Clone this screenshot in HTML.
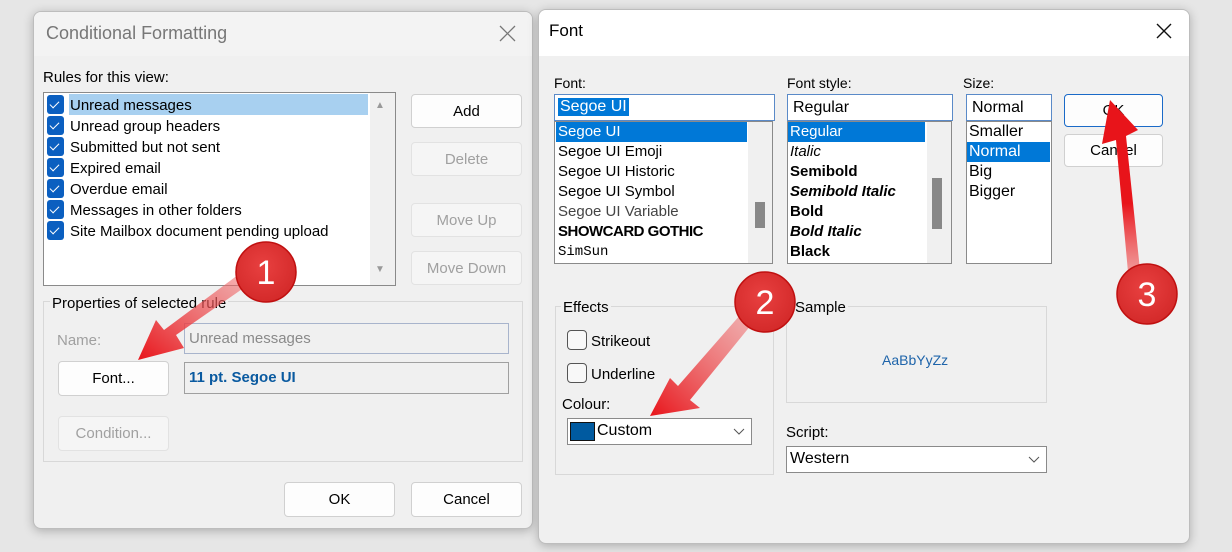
<!DOCTYPE html>
<html><head><meta charset="utf-8"><style>
*{box-sizing:border-box;margin:0;padding:0}
body{width:1232px;height:552px;background:#e6e6e6;font-family:"Liberation Sans",sans-serif;position:relative;overflow:hidden;color:#000}
.a{position:absolute}
.dlg{background:#f0f0f0;border:1px solid #bdbdbd;border-radius:8px;box-shadow:0 2px 10px rgba(0,0,0,.25)}
.btn{position:absolute;background:#fdfdfd;border:1px solid #d0d0d0;border-radius:4px;font-size:15px;text-align:center;display:flex;align-items:center;justify-content:center}
.dis{background:#f5f5f5;border-color:#e2e2e2;color:#a0a0a0}
.t{position:absolute;font-size:15px;white-space:nowrap}
.cb{position:absolute;width:17px;height:19px;background:#0b5fc0;border-radius:3px}
.cb:after{content:"";position:absolute;left:5px;top:4px;width:4px;height:8px;border:solid #fff;border-width:0 1.3px 1.3px 0;transform:rotate(45deg)}
.box{position:absolute;background:#fff;border:1px solid #8a8a8a}
.grp{position:absolute;border:1px solid #d8d8d8}
.li{position:absolute;font-size:15px;height:20px;line-height:20px;white-space:nowrap;padding-left:2px}
.sel{background:#0078d7;color:#fff}
</style></head><body>

<div class="a dlg" style="left:33px;top:11px;width:500px;height:518px;overflow:hidden">
 <div class="a" style="left:0;top:0;width:500px;height:44px;background:#f3f3f3"></div>
</div>
<div class="t" style="left:46px;top:23px;font-size:18px;color:#777">Conditional Formatting</div>
<svg class="a" style="left:499px;top:25px" width="18" height="18"><path d="M1 1L16 16M16 1L1 16" stroke="#777" stroke-width="1.3"/></svg>
<div class="t" style="left:43px;top:69px">Rules for this view:</div>
<div class="box" style="left:43px;top:92px;width:353px;height:194px"></div>
<div class="a" style="left:370px;top:93px;width:25px;height:192px;background:#f0f0f0"></div>
<div class="t" style="left:375px;top:100px;font-size:10px;color:#999">▲</div>
<div class="t" style="left:375px;top:264px;font-size:10px;color:#999">▼</div>
<div class="a" style="left:69px;top:94px;width:299px;height:21px;background:#a8d0f0"></div>
<div class="cb" style="left:47px;top:95px"></div><div class="t" style="left:70px;top:97px">Unread messages</div>
<div class="cb" style="left:47px;top:116px"></div><div class="t" style="left:70px;top:118px">Unread group headers</div>
<div class="cb" style="left:47px;top:137px"></div><div class="t" style="left:70px;top:139px">Submitted but not sent</div>
<div class="cb" style="left:47px;top:158px"></div><div class="t" style="left:70px;top:160px">Expired email</div>
<div class="cb" style="left:47px;top:179px"></div><div class="t" style="left:70px;top:181px">Overdue email</div>
<div class="cb" style="left:47px;top:200px"></div><div class="t" style="left:70px;top:202px">Messages in other folders</div>
<div class="cb" style="left:47px;top:221px"></div><div class="t" style="left:70px;top:223px">Site Mailbox document pending upload</div>
<div class="btn" style="left:411px;top:94px;width:111px;height:34px">Add</div>
<div class="btn dis" style="left:411px;top:142px;width:111px;height:34px">Delete</div>
<div class="btn dis" style="left:411px;top:203px;width:111px;height:34px">Move Up</div>
<div class="btn dis" style="left:411px;top:251px;width:111px;height:34px">Move Down</div>
<div class="grp" style="left:43px;top:301px;width:480px;height:161px"></div>
<div class="t" style="left:50px;top:295px;background:#f0f0f0;padding:0 2px">Properties of selected rule</div>
<div class="t" style="left:57px;top:332px;color:#a0a0a0">Name:</div>
<div class="a" style="left:184px;top:323px;width:325px;height:31px;border:1px solid #a8b4cc;background:#f0f0f0"></div>
<div class="t" style="left:189px;top:330px;color:#8a8a8a">Unread messages</div>
<div class="btn" style="left:58px;top:361px;width:111px;height:35px">Font...</div>
<div class="a" style="left:184px;top:362px;width:325px;height:32px;border:1px solid #a0a0a0"></div>
<div class="t" style="left:189px;top:369px;color:#0a5aa0;font-weight:bold">11 pt. Segoe UI</div>
<div class="btn dis" style="left:58px;top:416px;width:111px;height:35px">Condition...</div>
<div class="btn" style="left:284px;top:482px;width:111px;height:35px">OK</div>
<div class="btn" style="left:411px;top:482px;width:111px;height:35px">Cancel</div>

<div class="a dlg" style="left:538px;top:9px;width:652px;height:535px;overflow:hidden">
 <div class="a" style="left:0;top:0;width:652px;height:46px;background:#fff"></div>
</div>
<div class="t" style="left:549px;top:21px;font-size:17px">Font</div>
<svg class="a" style="left:1156px;top:23px" width="16" height="16"><path d="M1 1L15 15M15 1L1 15" stroke="#111" stroke-width="1.4"/></svg>
<div class="t" style="left:554px;top:75px;font-size:14px">Font:</div>
<div class="t" style="left:787px;top:75px;font-size:14px">Font style:</div>
<div class="t" style="left:963px;top:75px;font-size:14px">Size:</div>
<div class="box" style="left:554px;top:94px;width:221px;height:27px;border-color:#5a8ac8"></div>
<div class="t" style="left:558px;top:98px;background:#0078d7;color:#fff;padding:0 2px;font-size:16px">Segoe UI</div>
<div class="box" style="left:787px;top:94px;width:166px;height:27px;border-color:#5a8ac8"></div>
<div class="t" style="left:793px;top:99px;font-size:16px">Regular</div>
<div class="box" style="left:966px;top:94px;width:86px;height:27px;border-color:#5a8ac8"></div>
<div class="t" style="left:972px;top:99px;font-size:16px">Normal</div>

<div class="box" style="left:554px;top:121px;width:219px;height:143px"></div>
<div class="a" style="left:748px;top:122px;width:24px;height:141px;background:#f0f0f0"></div>
<div class="a" style="left:755px;top:202px;width:10px;height:26px;background:#888"></div>
<div class="li sel" style="left:556px;top:122px;width:191px">Segoe UI</div>
<div class="li" style="left:556px;top:142px">Segoe UI Emoji</div>
<div class="li" style="left:556px;top:162px">Segoe UI Historic</div>
<div class="li" style="left:556px;top:182px">Segoe UI Symbol</div>
<div class="li" style="left:556px;top:202px;color:#444">Segoe UI Variable</div>
<div class="li" style="left:556px;top:222px;font-weight:900;letter-spacing:-.5px">SHOWCARD GOTHIC</div>
<div class="li" style="left:556px;top:242px;font-family:'Liberation Mono',monospace;font-size:14px">SimSun</div>

<div class="box" style="left:787px;top:121px;width:165px;height:143px"></div>
<div class="a" style="left:927px;top:122px;width:24px;height:141px;background:#f0f0f0"></div>
<div class="a" style="left:932px;top:178px;width:10px;height:51px;background:#888"></div>
<div class="li sel" style="left:788px;top:122px;width:137px">Regular</div>
<div class="li" style="left:788px;top:142px;font-style:italic">Italic</div>
<div class="li" style="left:788px;top:162px;font-weight:bold">Semibold</div>
<div class="li" style="left:788px;top:182px;font-weight:bold;font-style:italic">Semibold Italic</div>
<div class="li" style="left:788px;top:202px;font-weight:bold">Bold</div>
<div class="li" style="left:788px;top:222px;font-weight:bold;font-style:italic">Bold Italic</div>
<div class="li" style="left:788px;top:242px;font-weight:900">Black</div>

<div class="box" style="left:966px;top:121px;width:86px;height:143px"></div>
<div class="li" style="left:967px;top:122px;font-size:16px">Smaller</div>
<div class="li sel" style="left:967px;top:142px;width:83px;font-size:16px">Normal</div>
<div class="li" style="left:967px;top:162px;font-size:16px">Big</div>
<div class="li" style="left:967px;top:182px;font-size:16px">Bigger</div>

<div class="btn" style="left:1064px;top:94px;width:99px;height:33px;border-color:#1a6ac8">OK</div>
<div class="btn" style="left:1064px;top:134px;width:99px;height:33px">Cancel</div>

<div class="grp" style="left:555px;top:306px;width:219px;height:169px"></div>
<div class="t" style="left:561px;top:299px;background:#f0f0f0;padding:0 2px;font-size:15px">Effects</div>
<div class="a" style="left:567px;top:330px;width:20px;height:20px;border:1px solid #555;border-radius:4px;background:#f8f8f8"></div>
<div class="t" style="left:591px;top:333px;font-size:15px">Strikeout</div>
<div class="a" style="left:567px;top:363px;width:20px;height:20px;border:1px solid #555;border-radius:4px;background:#f8f8f8"></div>
<div class="t" style="left:591px;top:366px;font-size:15px">Underline</div>
<div class="t" style="left:562px;top:396px;font-size:15px">Colour:</div>
<div class="box" style="left:567px;top:418px;width:185px;height:27px"></div>
<div class="a" style="left:570px;top:422px;width:25px;height:19px;background:#005aa0;border:1px solid #111"></div>
<div class="t" style="left:597px;top:422px;font-size:16px">Custom</div>
<svg class="a" style="left:733px;top:428px" width="12" height="8"><path d="M1 1L6 6L11 1" stroke="#555" fill="none"/></svg>
<div class="grp" style="left:786px;top:306px;width:261px;height:97px"></div>
<div class="t" style="left:793px;top:299px;background:#f0f0f0;padding:0 2px;font-size:15px">Sample</div>
<div class="t" style="left:882px;top:352px;font-size:14px;color:#1e64aa">AaBbYyZz</div>
<div class="t" style="left:786px;top:424px;font-size:15px">Script:</div>
<div class="box" style="left:786px;top:446px;width:261px;height:27px"></div>
<div class="t" style="left:790px;top:450px;font-size:16px">Western</div>
<svg class="a" style="left:1028px;top:456px" width="12" height="8"><path d="M1 1L6 6L11 1" stroke="#555" fill="none"/></svg>

<svg class="a" style="left:0;top:0" width="1232" height="552">
<defs>
<linearGradient id="g1" x1="1" y1="0" x2="0" y2="1"><stop offset="0" stop-color="#f08080" stop-opacity=".5"/><stop offset="1" stop-color="#e8141a"/></linearGradient>
<linearGradient id="g3" x1="0" y1="1" x2="0" y2="0"><stop offset="0" stop-color="#f06060" stop-opacity=".6"/><stop offset=".4" stop-color="#e8141a"/></linearGradient>
<radialGradient id="c" cx=".45" cy=".4" r=".6"><stop offset="0" stop-color="#e84040"/><stop offset="1" stop-color="#d42a2a"/></radialGradient>
</defs>
<polygon points="250,266 258,278 176,335 184,348 138,360 156,320 164,330" fill="url(#g1)"/>
<polygon points="748,306 760,314 690,400 700,408 650,416 670,378 678,386" fill="url(#g1)"/>
<polygon points="1140,270 1128,272 1116,140 1102,144 1110,100 1138,130 1126,136" fill="url(#g3)"/>
<g stroke="#c01010" stroke-width="1.5" fill="url(#c)">
<circle cx="266" cy="272" r="30"/><circle cx="765" cy="302" r="30"/><circle cx="1147" cy="294" r="30"/></g>
<g fill="#fff" font-family="Liberation Sans" font-size="34" text-anchor="middle">
<text x="266" y="284">1</text><text x="765" y="314">2</text><text x="1147" y="306">3</text></g>
</svg>
</body></html>
